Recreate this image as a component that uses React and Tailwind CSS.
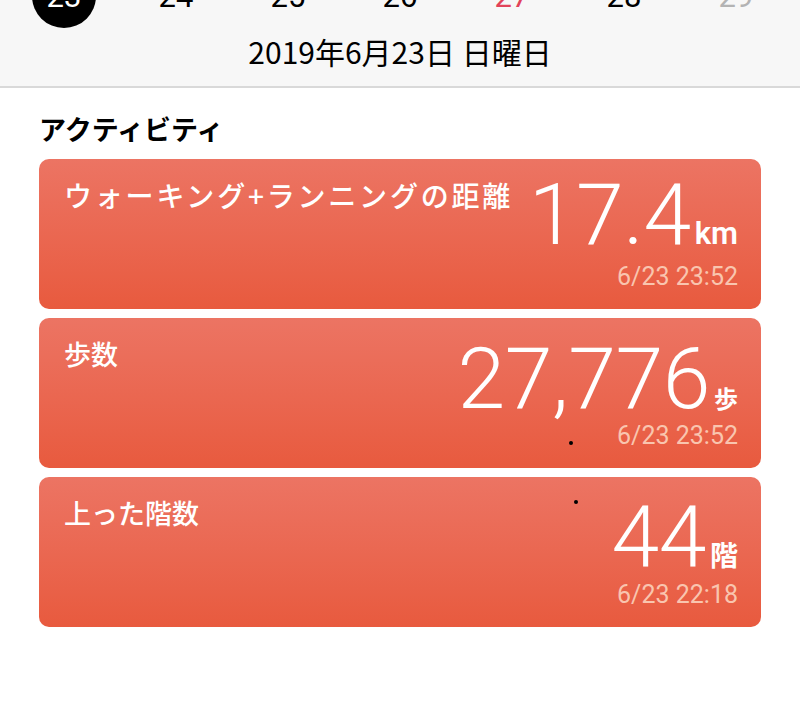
import React from "react";

const jp = { fontFamily: '"Noto Sans CJK JP", "Noto Sans", sans-serif' };
const num = { fontFamily: 'Roboto, "Noto Sans", sans-serif' };

function Card({ title, value, unit, time, unitSize, titleCls }) {
  return (
    <div className="flex h-[150px] justify-between rounded-[10px] bg-gradient-to-b from-[#ec7463] to-[#e85a3e] pl-[25px] pr-[23px] pt-[19px] pb-[18px]">
      <div className={`font-medium leading-[34px] text-white ${titleCls}`} style={jp}>
        {title}
      </div>
      <div className="flex flex-col items-end self-end">
        <div className="flex items-baseline text-white">
          <span className="text-[86px] font-light leading-[72px] tracking-[-0.005em]" style={num}>
            {value}
          </span>
          <span className={`${unitSize} ml-[4px] font-semibold`} style={unit === "km" ? num : jp}>
            {unit}
          </span>
        </div>
        <div className="mt-[6px] text-[25px] leading-[28px] text-[#f9c5af]" style={num}>
          {time}
        </div>
      </div>
    </div>
  );
}

export default function App() {
  const days = [
    { d: "23", c: "text-white", sel: true },
    { d: "24", c: "text-black" },
    { d: "25", c: "text-black" },
    { d: "26", c: "text-black" },
    { d: "27", c: "text-[#e2435a]" },
    { d: "28", c: "text-black" },
    { d: "29", c: "text-[#b3b3b3]" },
  ];
  return (
    <div className="relative h-[705px] w-[800px] overflow-hidden bg-white">
      <div className="h-[88px] border-b-[2px] border-[#d9d9d9] bg-[#f7f7f7]">
        <div className="flex h-[28px] items-end px-[32px] justify-between">
          {days.map((x) => (
            <div
              key={x.d}
              className={`flex h-[64px] w-[64px] shrink-0 items-center justify-center rounded-full ${x.sel ? "bg-black" : ""}`}
            >
              <span className={`text-[31px] leading-none ${x.c}`} style={num}>
                {x.d}
              </span>
            </div>
          ))}
        </div>
        <div className="mt-[5px] text-center text-[30px] leading-[36px] text-black" style={jp}>
          2019年6月23日 日曜日
        </div>
      </div>

      <div className="px-[39px]">
        <div className="mt-[24px] mb-[13px] text-[27px] font-bold leading-[34px] text-black" style={jp}>
          アクティビティ
        </div>
        <div className="flex flex-col gap-[9px]">
          <Card title="ウォーキング+ランニングの距離" value="17.4" unit="km" time="6/23 23:52" unitSize="text-[31px]" titleCls="text-[28px] tracking-[0.1em]" />
          <Card title="歩数" value="27,776" unit="歩" time="6/23 23:52" unitSize="text-[24px]" titleCls="text-[27px]" />
          <Card title="上った階数" value="44" unit="階" time="6/23 22:18" unitSize="text-[28px]" titleCls="text-[27px]" />
        </div>
      </div>

      <div className="absolute left-[569px] top-[441px] h-[4px] w-[4px] rounded-full bg-black" />
      <div className="absolute left-[574px] top-[500px] h-[4px] w-[4px] rounded-full bg-black" />
    </div>
  );
}
